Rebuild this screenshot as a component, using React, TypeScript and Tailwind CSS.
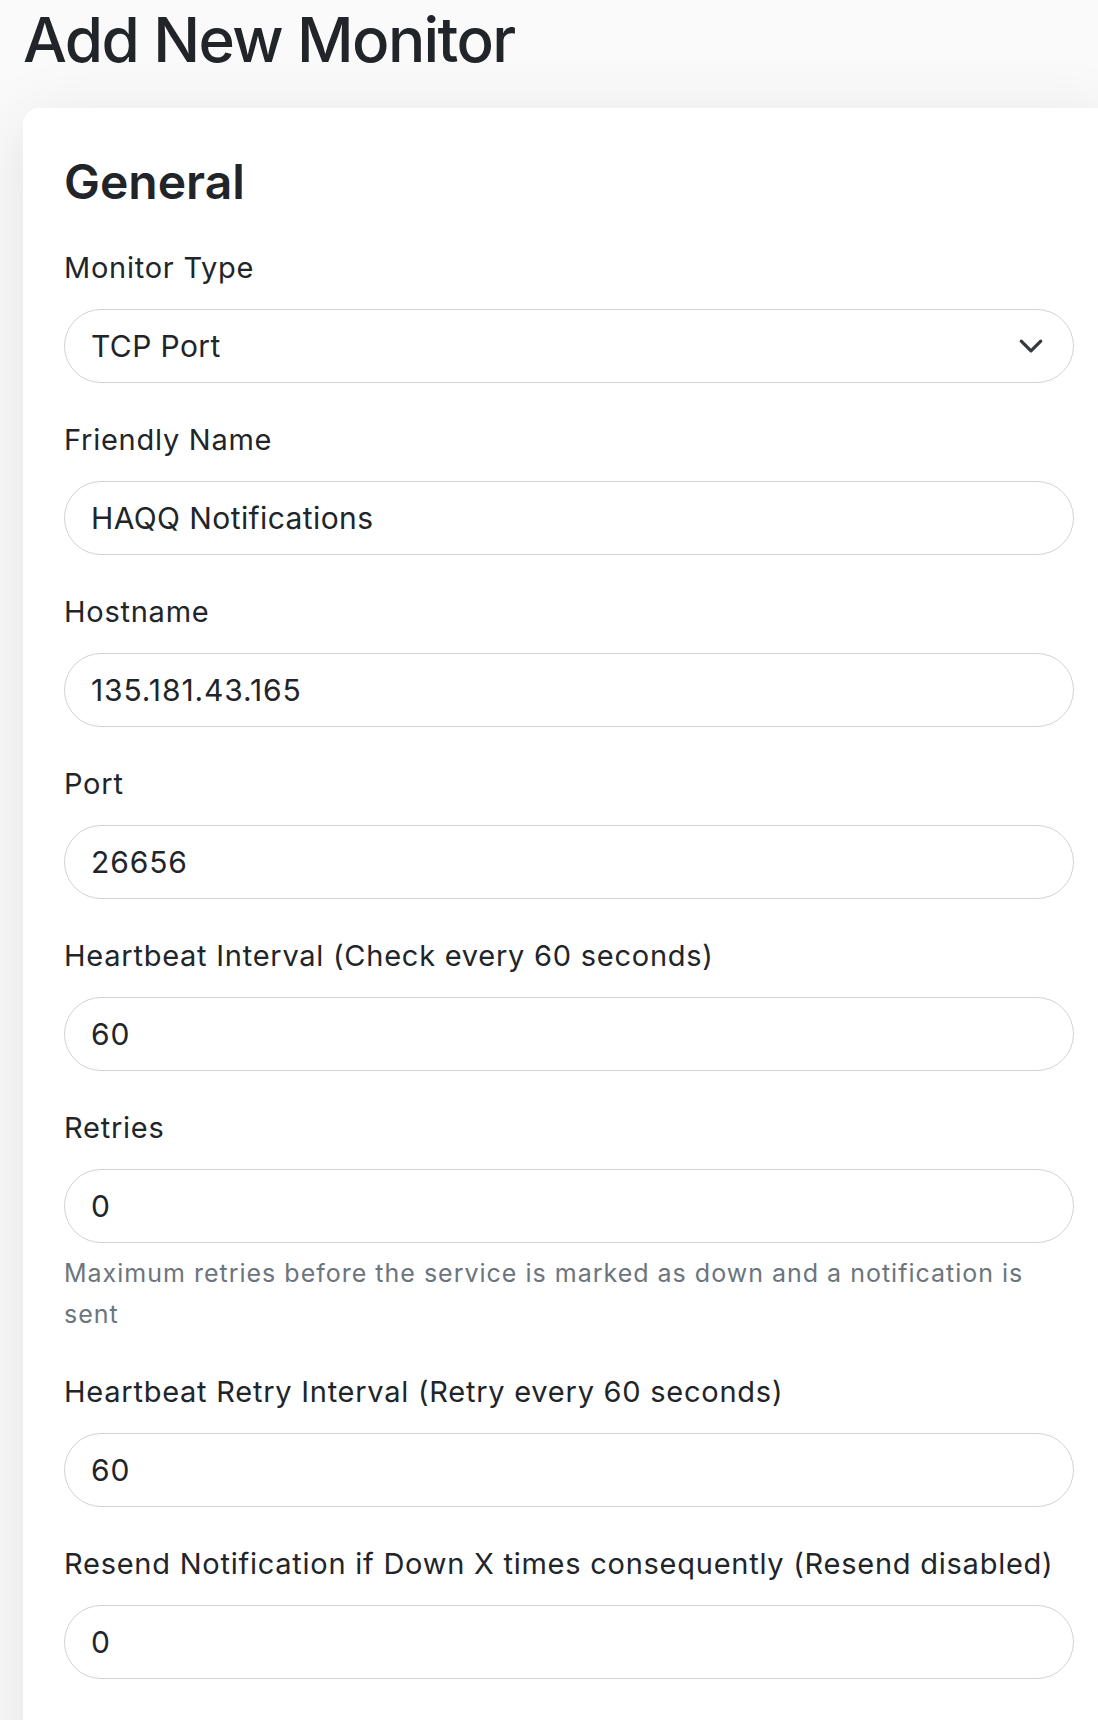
import { ReactNode } from 'react'

type Field = {
  label: string
  value: string
  help?: string
}

const FIELDS: Field[] = [
  { label: 'Friendly Name', value: 'HAQQ Notifications' },
  { label: 'Hostname', value: '135.181.43.165' },
  { label: 'Port', value: '26656' },
  { label: 'Heartbeat Interval (Check every 60 seconds)', value: '60' },
  {
    label: 'Retries',
    value: '0',
    help: 'Maximum retries before the service is marked as down and a notification is sent',
  },
  { label: 'Heartbeat Retry Interval (Retry every 60 seconds)', value: '60' },
  { label: 'Resend Notification if Down X times consequently (Resend disabled)', value: '0' },
]

function Row({ label, children }: { label: string; children: ReactNode }) {
  return (
    <div className="mt-[36px] first:mt-0">
      <div className="mb-[20px] text-[29px] leading-[42px] tracking-[0.75px] text-[#212529]">{label}</div>
      {children}
    </div>
  )
}

function Chevron() {
  return (
    <svg viewBox="0 0 16 16" className="h-[26px] w-[26px]" fill="none">
      <path d="m2 5 6 6 6-6" stroke="#343a40" strokeWidth="2" strokeLinecap="round" strokeLinejoin="round" />
    </svg>
  )
}

export default function App() {
  return (
    <div
      className="min-h-[1720px] overflow-hidden bg-[#fafafa] text-[#212529]"
      style={{ fontFamily: 'Inter, "Noto Sans", sans-serif' }}
    >
      <h1 className="pl-[23px] pt-[9px] text-[62px] font-medium leading-[62px] tracking-[-1.6px]">Add New Monitor</h1>

      <div className="ml-[23px] mt-[37px] w-[1092px] rounded-[16px] bg-white px-[41px] pt-[45px] pb-[120px] shadow-[0_15px_70px_rgba(0,0,0,0.1)]">
        <h2 className="mb-[36px] text-[48px] font-semibold leading-[58px]">General</h2>

        <div className="flex flex-col">
          <Row label="Monitor Type">
            <div className="flex h-[74px] w-[1010px] items-center justify-between rounded-full border border-[#ced4da] bg-white pl-[26px] pr-[29px]">
              <span className="text-[30px] tracking-[0.4px]">TCP Port</span>
              <Chevron />
            </div>
          </Row>

          {FIELDS.map((f) => {
            const numeric = /^[\d.]+$/.test(f.value)
            return (
              <Row key={f.label} label={f.label}>
                <div className="flex h-[74px] w-[1010px] items-center rounded-full border border-[#ced4da] bg-white pl-[26px]">
                  <span className={numeric ? 'text-[30px] tracking-[0.9px]' : 'text-[30px] tracking-[0.4px]'}>{f.value}</span>
                </div>
                {f.help && (
                  <div className="mt-[10px] max-w-[975px] text-[25px] leading-[41px] tracking-[1px] text-[#6c757d]">
                    {f.help}
                  </div>
                )}
              </Row>
            )
          })}
        </div>
      </div>
    </div>
  )
}
